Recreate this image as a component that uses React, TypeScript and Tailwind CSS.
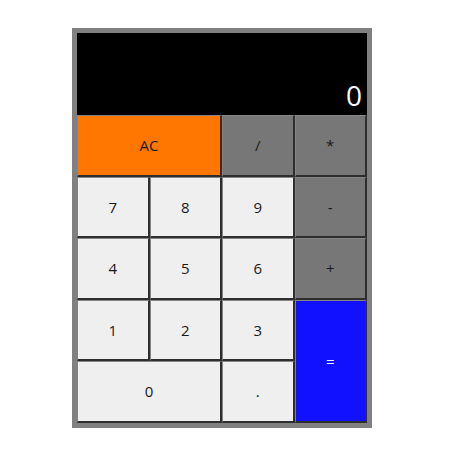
import React from 'react';

type Key = { label: string; cls: string };

const base =
  "flex items-center justify-center border-t border-l border-r-2 border-b-2 border-t-[#858585] border-l-[#858585] border-r-[#2e2e2e] border-b-[#2e2e2e] text-[15px] text-[#1a1a1a]";

const keys: Key[] = [
  { label: 'AC', cls: 'col-span-2 bg-[#ff7700]' },
  { label: '/', cls: 'bg-[#777777]' },
  { label: '*', cls: 'bg-[#777777]' },
  { label: '7', cls: 'bg-[#efefef]' },
  { label: '8', cls: 'bg-[#efefef]' },
  { label: '9', cls: 'bg-[#efefef]' },
  { label: '-', cls: 'bg-[#777777]' },
  { label: '4', cls: 'bg-[#efefef]' },
  { label: '5', cls: 'bg-[#efefef]' },
  { label: '6', cls: 'bg-[#efefef]' },
  { label: '+', cls: 'bg-[#777777]' },
  { label: '1', cls: 'bg-[#efefef]' },
  { label: '2', cls: 'bg-[#efefef]' },
  { label: '3', cls: 'bg-[#efefef]' },
  { label: '=', cls: 'row-span-2 bg-[#1111ff] text-white' },
  { label: '0', cls: 'col-span-2 bg-[#efefef]' },
  { label: '.', cls: 'bg-[#efefef]' },
];

export default function App() {
  return (
    <div className="w-[464px] h-[472px] bg-white pt-[28px] pl-[72px]" style={{ fontFamily: '"Open Sans", "Noto Sans", sans-serif' }}>
      <div className="w-[300px] h-[400px] bg-[#808080] p-[5px] flex flex-col">
        <div className="h-[82px] bg-black flex items-end justify-end pr-[5px] pb-[4px]">
          <span className="text-[28px] text-white leading-none pb-[2px]">0</span>
        </div>
        <div className="flex-1 grid grid-cols-4 grid-rows-5">
          {keys.map((k) => (
            <button key={k.label} className={`${base} ${k.cls}`}>
              {k.label}
            </button>
          ))}
        </div>
      </div>
    </div>
  );
}
